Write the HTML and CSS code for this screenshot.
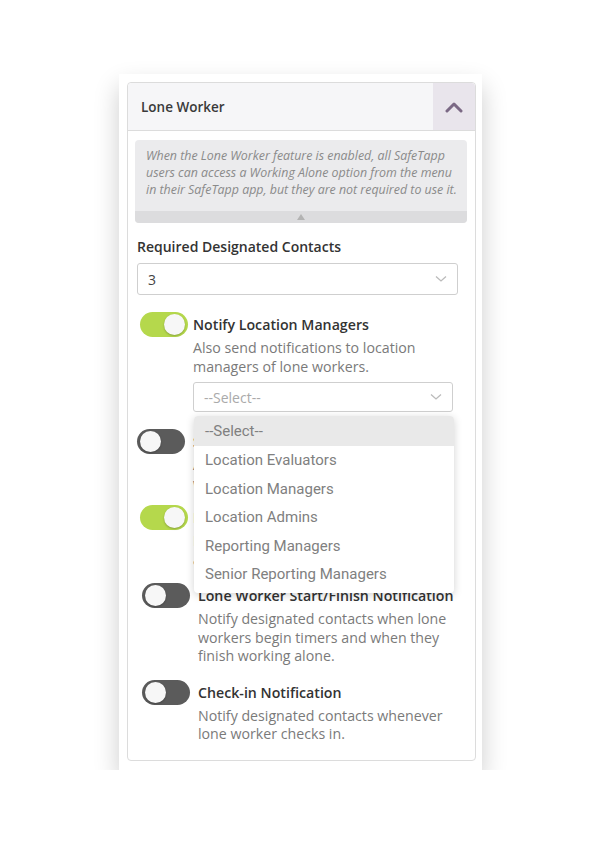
FILE: index.html
```html
<!DOCTYPE html>
<html lang="en">
<head>
  <meta charset="UTF-8" />
  <title>Lone Worker Settings</title>
  <link rel="stylesheet" href="styles.css">
</head>
<body>

<div class="sheet">
  <div class="panel">
    <div class="panel-head">
      <span class="panel-title">Lone Worker</span>
      <button type="button" class="collapse-btn">
        <svg width="18" height="12" viewBox="0 0 18 12"><path d="M2 10 L9 3 L16 10" fill="none" stroke="#7b6985" stroke-width="3" stroke-linecap="round" stroke-linejoin="round"/></svg>
      </button>
    </div>
    <div class="panel-body">
      <div class="info">
        <p>When the Lone Worker feature is enabled, all SafeTapp users can access a Working Alone option from the menu in their SafeTapp app, but they are not required to use it.</p>
        <div class="info-grip"><span class="grip-arrow"></span></div>
      </div>

      <label class="field-label">Required Designated Contacts</label>
      <div class="select">
        <span>3</span>
        <svg class="caret" width="12" height="8" viewBox="0 0 12 8"><path d="M1 1.5 L6 6 L11 1.5" fill="none" stroke="#bbb" stroke-width="1.3"/></svg>
      </div>

      <div class="setting">
        <span class="switch on"><span class="knob"></span></span>
        <div class="setting-text">
          <div class="setting-name">Notify Location Managers</div>
          <div class="setting-desc">Also send notifications to location managers of lone workers.</div>
          <div class="dropdown">
            <div class="select small">
              <span class="placeholder">--Select--</span>
              <svg class="caret" width="12" height="8" viewBox="0 0 12 8"><path d="M1 1.5 L6 6 L11 1.5" fill="none" stroke="#bbb" stroke-width="1.3"/></svg>
            </div>
            <ul class="menu">
              <li class="active">--Select--</li>
              <li>Location Evaluators</li>
              <li>Location Managers</li>
              <li>Location Admins</li>
              <li>Reporting Managers</li>
              <li>Senior Reporting Managers</li>
            </ul>
          </div>
        </div>
      </div>

      <div class="setting left">
        <span class="switch"><span class="knob"></span></span>
        <div class="setting-text">
          <div class="setting-name">Send Overdue Alerts</div>
          <div class="setting-desc">Alert designated contacts when a lone worker misses a check-in.</div>
        </div>
      </div>

      <div class="setting tight">
        <span class="switch on"><span class="knob"></span></span>
        <div class="setting-text">
          <div class="setting-name">Escalate Overdue Alerts</div>
          <div class="setting-desc">Escalate to location managers when an alert goes unanswered.</div>
        </div>
      </div>

      <div class="setting wide">
        <span class="switch"><span class="knob"></span></span>
        <div class="setting-text">
          <div class="setting-name">Lone Worker Start/Finish Notification</div>
          <div class="setting-desc">Notify designated contacts when lone workers begin timers and when they finish working alone.</div>
        </div>
      </div>

      <div class="setting wide">
        <span class="switch"><span class="knob"></span></span>
        <div class="setting-text">
          <div class="setting-name">Check-in Notification</div>
          <div class="setting-desc">Notify designated contacts whenever lone worker checks in.</div>
        </div>
      </div>
    </div>
  </div>
</div>

</body>
</html>
```

FILE: styles.css
```css
body {
  margin: 0;
  background: #fff;
  font-family: "Open Sans", Arial, sans-serif;
  color: #333;
}
.sheet {
  width: 363px;
  margin: 74px 0 0 119px;
  padding: 8px 6px 9px 8px;
  box-sizing: border-box;
  background: #fff;
  box-shadow: 0 12px 24px rgba(0,0,0,0.2);
}
.panel {
  border: 1px solid #dcdcdc;
  border-radius: 4px;
}
.panel-head {
  display: flex;
  align-items: stretch;
  height: 47px;
  background: #f6f6f8;
  border-bottom: 1px solid #dcdcdc;
  border-radius: 4px 4px 0 0;
  overflow: hidden;
}
.panel-title {
  flex: 1;
  display: flex;
  align-items: center;
  padding-left: 13px;
  font-size: 13.5px;
  font-weight: 600;
  color: #3a3a3a;
}
.collapse-btn {
  width: 42px;
  border: none;
  background: #e9e5ec;
  display: flex;
  align-items: center;
  justify-content: center;
  padding: 0;
}
.panel-body {
  padding: 9px 8px 16px 7px;
}
.info {
  background: #ebebed;
  border-radius: 4px;
  overflow: hidden;
}
.info p {
  margin: 0;
  padding: 7px 8px 13px 11px;
  font-size: 12.4px;
  line-height: 17px;
  font-style: italic;
  color: #8a8a8a;
}
.info-grip {
  height: 12px;
  background: #dcdcde;
  display: flex;
  justify-content: center;
  align-items: center;
}
.grip-arrow {
  width: 0;
  height: 0;
  border-left: 4px solid transparent;
  border-right: 4px solid transparent;
  border-bottom: 6px solid #b3b3b3;
}
.field-label {
  display: block;
  margin: 14px 0 7px 2px;
  font-size: 14px;
  font-weight: 600;
  color: #333;
}
.select {
  display: flex;
  align-items: center;
  justify-content: space-between;
  height: 32px;
  width: 321px;
  margin-left: 2px;
  box-sizing: border-box;
  padding: 0 10px 0 10px;
  border: 1px solid #cfcfcf;
  border-radius: 3px;
  font-size: 14px;
  color: #444;
}
.select.small {
  width: 260px;
  height: 30px;
  margin: 0;
}
.placeholder {
  color: #aaa;
}
.dropdown {
  position: relative;
  margin-top: 6px;
}
.setting {
  display: flex;
  align-items: flex-start;
  gap: 5px;
  margin: 17px 0 0 5px;
}
.setting.left {
  margin-left: 2px;
  gap: 8px;
}
.setting.tight {
  margin-top: 12px;
}
.setting.wide {
  margin-left: 7px;
  gap: 8px;
  margin-top: 14px;
}
.switch {
  flex: none;
  position: relative;
  width: 48px;
  height: 25px;
  border-radius: 13px;
  background: #5b5b5b;
}
.switch.on {
  background: #b5d84c;
}
.knob {
  position: absolute;
  top: 2px;
  left: 3px;
  width: 21px;
  height: 21px;
  border-radius: 50%;
  background: #f7f7f7;
  box-shadow: 0 1px 2px rgba(0,0,0,0.25);
}
.switch.on .knob {
  left: 24px;
}
.setting-text {
  flex: 1;
}
.setting-name {
  font-size: 14.2px;
  font-weight: 600;
  line-height: 25px;
  color: #333;
}
.setting-desc {
  font-size: 14.2px;
  line-height: 18.5px;
  margin-top: 2px;
  color: #7a7a7a;
}
.menu {
  position: absolute;
  top: 34px;
  left: 1px;
  width: 260px;
  margin: 0;
  padding: 0 0 4px;
  list-style: none;
  background: #fff;
  border-radius: 4px;
  box-shadow: 0 2px 8px rgba(0,0,0,0.18);
  font-family: Roboto, Arial, sans-serif;
  font-size: 15px;
  color: #808080;
  z-index: 2;
}
.menu li {
  height: 28.5px;
  line-height: 28.5px;
  padding-left: 11px;
}
.menu li.active {
  height: 30px;
  line-height: 30px;
  background: #e9e9e9;
  border-radius: 4px 4px 0 0;
}
```
